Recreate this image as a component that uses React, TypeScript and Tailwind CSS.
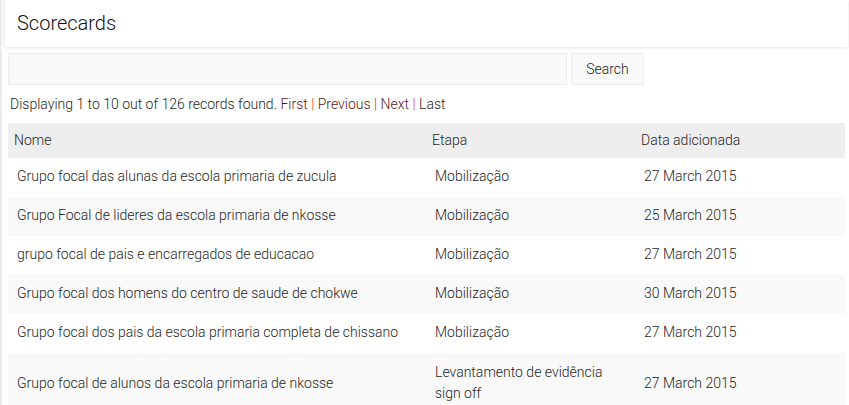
import React from "react";

const rows: [string, string, string][] = [
  ["Grupo focal das alunas da escola primaria de zucula", "Mobilização", "27 March 2015"],
  ["Grupo Focal de lideres da escola primaria de nkosse", "Mobilização", "25 March 2015"],
  ["grupo focal de pais e encarregados de educacao", "Mobilização", "27 March 2015"],
  ["Grupo focal dos homens do centro de saude de chokwe", "Mobilização", "30 March 2015"],
  ["Grupo focal dos pais da escola primaria completa de chissano", "Mobilização", "27 March 2015"],
  ["Grupo focal de alunos da escola primaria de nkosse", "Levantamento de evidência sign off", "27 March 2015"],
];

export default function App() {
  return (
    <div
      className="flex min-h-[405px] bg-white text-[#1f1f1f] font-light"
      style={{ fontFamily: "Roboto, 'Noto Sans', sans-serif" }}
    >
      <div className="w-[2px] shrink-0 bg-[#ececec]" />
      <div className="flex-1 min-w-0">
        <div className="ml-[2px] mr-[1px] h-[47px] bg-white shadow-[0_1px_3px_rgba(0,0,0,0.1)] border-l border-[#f0f0f0] flex items-center pl-[12px] pb-[1px]">
          <h1 className="text-[20px] text-[#111] leading-none font-light">Scorecards</h1>
        </div>
        <div className="ml-[6px] mr-[2px]">
          <div className="mt-[6px] flex gap-[4px]">
            <input
              className="w-[559px] h-[32px] bg-[#f9f9f9] border border-[#ececec] outline-none"
              type="text"
            />
            <button className="w-[73px] h-[32px] bg-[#f9f9f9] border border-[#ececec] text-[14px] text-[#222] font-light">
              Search
            </button>
          </div>
          <div className="mt-[9px] ml-[2px] text-[14px] leading-[20px]">
            Displaying 1 to 10 out of 126 records found.{" "}
            <span className="text-[#5a1616]">First</span>{" "}
            <span className="text-[#c0392b]">|</span>{" "}
            <span className="text-[#5a1616]">Previous</span>{" "}
            <span className="text-[#c0392b]">|</span>{" "}
            <span className="text-[#5a1616]">Next</span>{" "}
            <span className="text-[#c0392b]">|</span>{" "}
            <span className="text-[#1f1f1f]">Last</span>
          </div>
          <table className="mt-[9px] w-[837px] border-collapse text-[14px] table-fixed">
            <colgroup>
              <col className="w-[418px]" />
              <col className="w-[209px]" />
              <col className="w-[210px]" />
            </colgroup>
            <thead>
              <tr className="bg-[#eeeeee] h-[35px]">
                <th className="text-left font-light pl-[6px] pr-[6px]">Nome</th>
                <th className="text-left font-light pl-[6px] pr-[6px]">Etapa</th>
                <th className="text-left font-light pl-[6px] pr-[6px]">Data adicionada</th>
              </tr>
            </thead>
            <tbody>
              {rows.map((r, i) => {
                const pad = i === rows.length - 1 ? "pt-[9px] pb-[9px]" : "pt-[8px] pb-[10px]";
                return (
                  <tr key={i} className={i % 2 === 1 ? "bg-[#f9f9f9]" : "bg-white"}>
                    <td className={`pl-[9px] pr-[9px] ${pad} leading-[21px] align-middle`}>{r[0]}</td>
                    <td className={`pl-[9px] pr-[20px] ${pad} leading-[21px] align-middle`}>{r[1]}</td>
                    <td className={`pl-[9px] pr-[9px] ${pad} leading-[21px] align-middle`}>{r[2]}</td>
                  </tr>
                );
              })}
            </tbody>
          </table>
        </div>
      </div>
    </div>
  );
}
